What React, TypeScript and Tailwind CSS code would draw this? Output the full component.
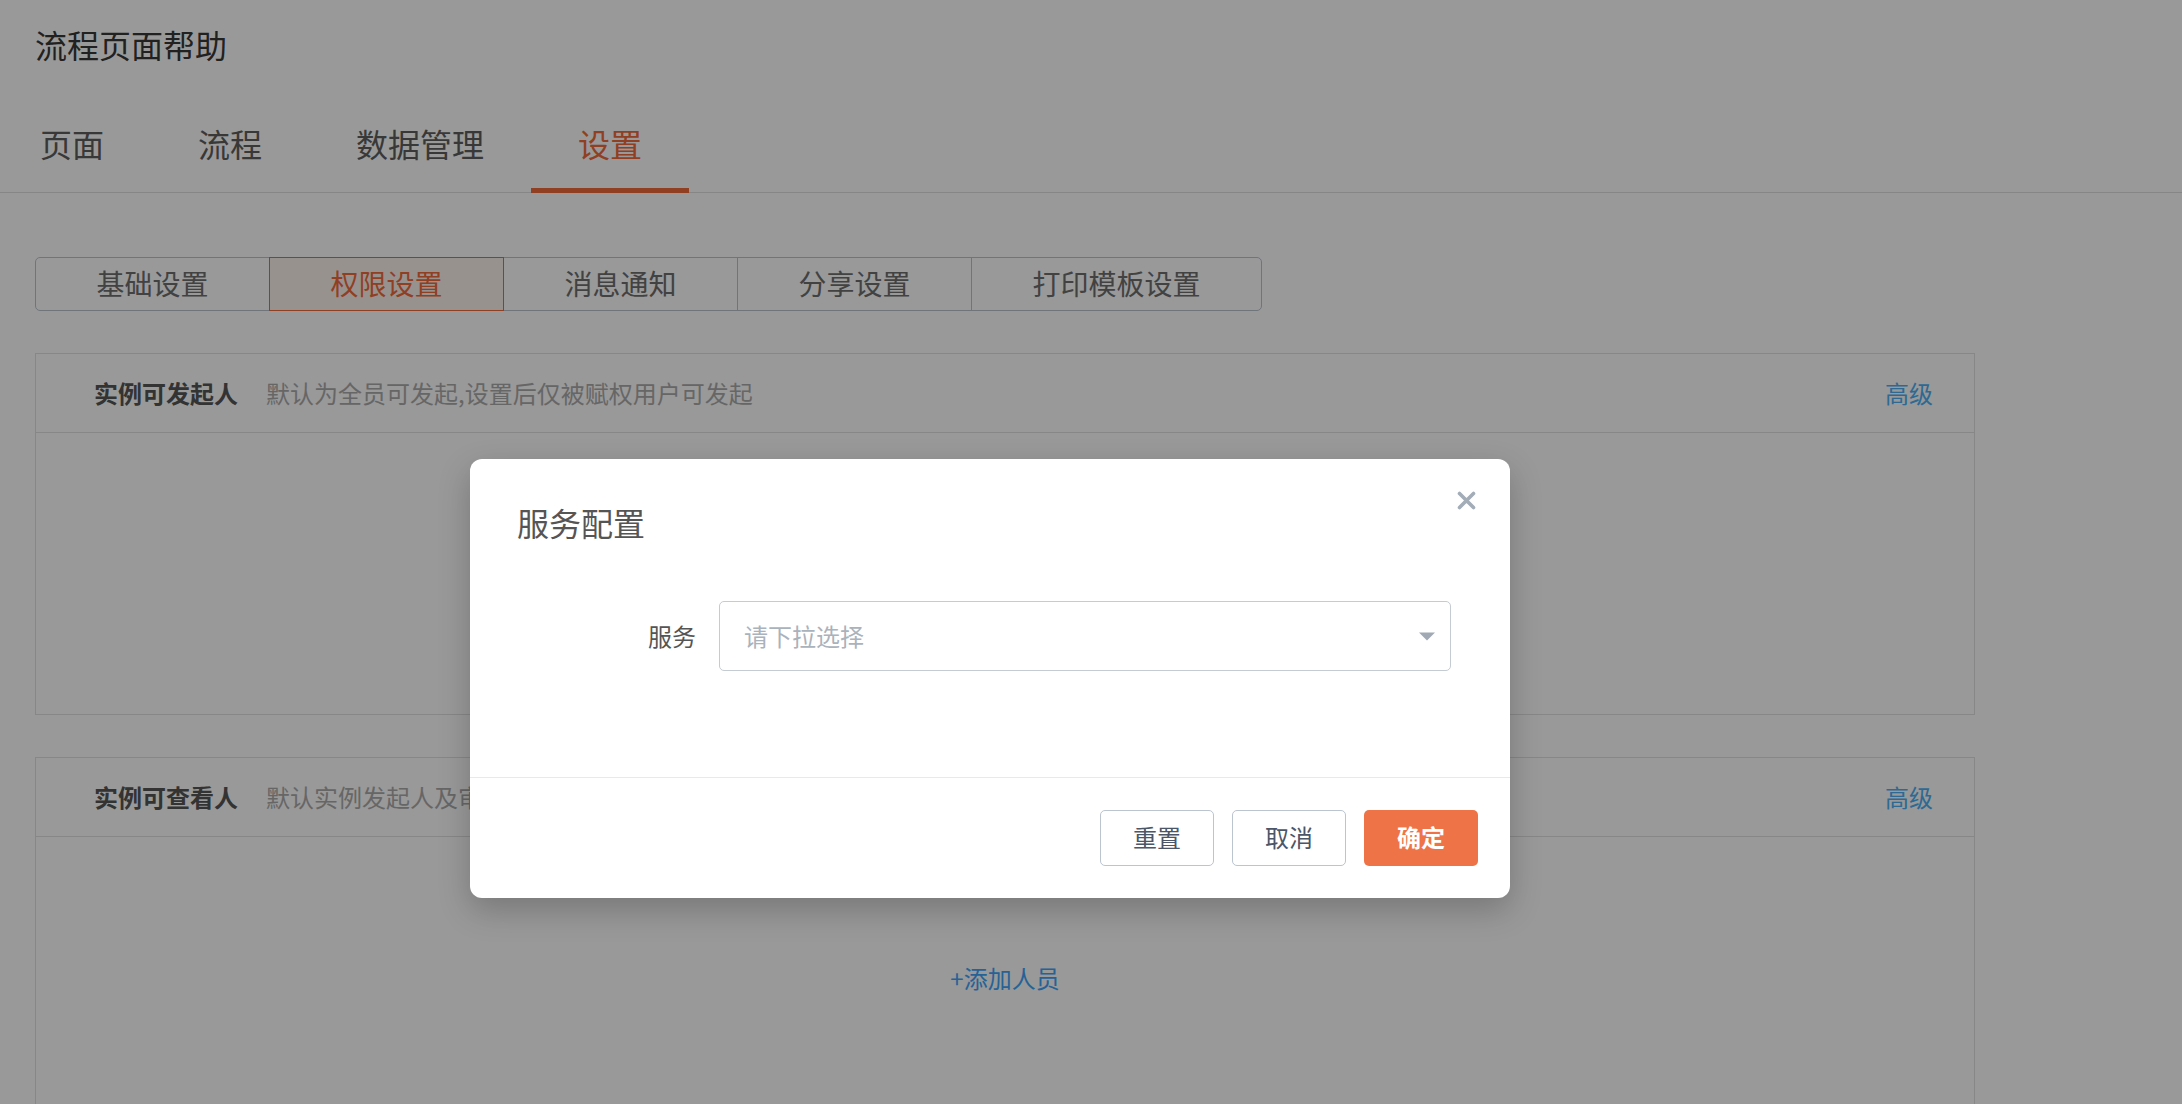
import React from "react";

const mainTabs = ["页面", "流程", "数据管理", "设置"];
const subTabs = ["基础设置", "权限设置", "消息通知", "分享设置", "打印模板设置"];

function PermissionCard({ title, desc }: { title: string; desc: string }) {
  return (
    <div className="w-[1940px] border border-[#e2e2e2]">
      <div className="flex h-[79px] items-center border-b border-[#e2e2e2] pb-[1px] pl-[58px] pr-[41px] text-[24px] leading-[32px]">
        <span className="font-bold text-[#555]">{title}</span>
        <span className="ml-[28px] text-[#ababab]">{desc}</span>
        <span className="ml-auto text-[#4cb0f5]">高级</span>
      </div>
      <div className="flex h-[281px] items-center justify-center">
        <span className="text-[24px] leading-[32px] text-[#3fa5fb]">+添加人员</span>
      </div>
    </div>
  );
}

function ServiceDialog() {
  return (
    <div className="absolute left-[470px] top-[459px] z-30 w-[1040px] rounded-[12px] bg-white shadow-[0_12px_32px_rgba(0,0,0,0.22)]">
      {/* close */}
      <button className="absolute right-[34px] top-[32px] h-[19px] w-[19px]" aria-label="关闭">
        <svg viewBox="0 0 19 19" width="19" height="19" fill="none">
          <path d="M2.5 2.5l14 14M16.5 2.5l-14 14" stroke="#a3adb8" strokeWidth="3.6" strokeLinecap="round" />
        </svg>
      </button>

      <div className="pl-[47px] pt-[43px] text-[32px] leading-[40px] text-[#555]">服务配置</div>

      <div className="mb-[106px] mt-[59px] flex items-center pl-[47px]">
        <label className="w-[181px] pr-[2px] text-right text-[24px] leading-[32px] text-[#555]">服务</label>
        <div className="ml-[21px] flex h-[70px] w-[732px] items-center rounded-[5px] border border-[#c5cbd3] pl-[24px] pr-[15px]">
          <span className="text-[24px] leading-[32px] text-[#aab2bb]">请下拉选择</span>
          <svg className="ml-auto" width="16" height="9" viewBox="0 0 16 9">
            <path d="M0 0.5h16L8 8.5z" fill="#a0a9b4" />
          </svg>
        </div>
      </div>

      <div className="flex justify-end gap-[18px] border-t border-[#e6eaef] px-[32px] py-[32px]">
        <button className="h-[56px] w-[114px] rounded-[5px] border border-[#bcc4cf] pb-[2px] text-[24px] text-[#4b5668]">重置</button>
        <button className="h-[56px] w-[114px] rounded-[5px] border border-[#bcc4cf] pb-[2px] text-[24px] text-[#4b5668]">取消</button>
        <button className="h-[56px] w-[114px] rounded-[5px] bg-[#ee7347] pb-[2px] text-[24px] font-semibold text-white">确定</button>
      </div>
    </div>
  );
}

export default function App() {
  return (
    <div className="relative h-screen w-full overflow-hidden bg-white font-[family-name:'Noto_Sans_CJK_SC','Noto_Sans',sans-serif]">
      <div className="flex h-[94px] items-center pb-[6px] pl-[35px] text-[32px] leading-[40px] text-[#383838]">流程页面帮助</div>

      <nav className="flex border-b border-[#e0e0e0]">
        <div className="-ml-[7px] flex">
          {mainTabs.map((t) => {
            const active = t === "设置";
            return (
              <div
                key={t}
                className={`relative flex h-[98px] items-center px-[47px] text-[32px] leading-[40px] ${
                  active ? "text-[#f06a3a]" : "text-[#5e5e5e]"
                }`}
              >
                {t}
                {active && <span className="absolute -bottom-px left-0 right-0 h-[5px] bg-[#f06a3a]" />}
              </div>
            );
          })}
        </div>
      </nav>

      <div className="mt-[64px] flex pl-[35px]">
        {subTabs.map((t, i) => {
          const active = t === "权限设置";
          return (
            <div
              key={t}
              className={`relative flex h-[54px] items-center border px-[60.5px] pb-[3px] text-[28px] leading-[36px] ${
                i > 0 ? "-ml-px" : ""
              } ${i === 0 ? "rounded-l-[5px]" : ""} ${i === subTabs.length - 1 ? "rounded-r-[5px]" : ""} ${
                active
                  ? "z-10 border-[#f06a3a] bg-[#fdf3ef] text-[#f06a3a]"
                  : "border-[#b9c3ce] text-[#6e6e6e]"
              }`}
            >
              {t}
            </div>
          );
        })}
      </div>

      <div className="mt-[42px] flex flex-col gap-[42px] pl-[35px]">
        <PermissionCard title="实例可发起人" desc="默认为全员可发起,设置后仅被赋权用户可发起" />
        <PermissionCard title="实例可查看人" desc="默认实例发起人及审批人可查看,设置后被赋权用户也可查看" />
      </div>

      {/* mask + dialog */}
      <div className="absolute inset-0 z-20 bg-black/40" />
      <ServiceDialog />
    </div>
  );
}
